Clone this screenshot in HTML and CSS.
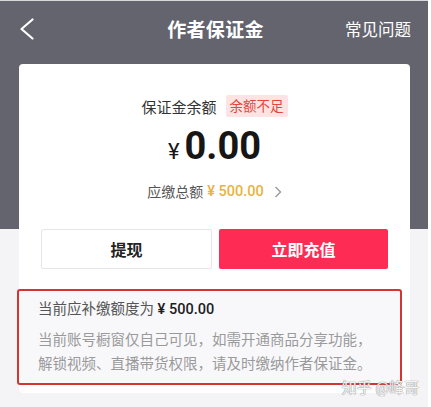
FILE: index.html
```html
<!DOCTYPE html>
<html lang="zh-CN">
<head>
    <meta charset="UTF-8">
    <meta name="viewport" content="width=device-width, initial-scale=1.0">
    <title>作者保证金</title>
    <link rel="stylesheet" href="styles.css">
</head>
<body>
    <div class="screen">
        <div class="nav">
            <span class="back">
                <svg width="14" height="22" viewBox="0 0 14 22"><polyline points="12.5,1.5 1.5,11 12.5,20.5" fill="none" stroke="#fff" stroke-width="2.2" stroke-linecap="round" stroke-linejoin="round"/></svg>
            </span>
            <h1>作者保证金</h1>
            <span class="faq">常见问题</span>
        </div>

        <div class="card">
            <div class="balance-row">
                <span class="label">保证金余额</span>
                <span class="badge">余额不足</span>
            </div>
            <div class="amount">
                <span class="yen">¥</span><span class="num">0.00</span>
            </div>
            <div class="due">
                <span>应缴总额</span>
                <span class="due-num">¥ 500.00</span>
                <svg class="arrow" width="8" height="12" viewBox="0 0 8 12"><polyline points="1.5,1 6.5,6 1.5,11" fill="none" stroke="#9a9a9a" stroke-width="1.4"/></svg>
            </div>
            <div class="buttons">
                <button class="btn btn-plain">提现</button>
                <button class="btn btn-red">立即充值</button>
            </div>
            <div class="notice">
                <p class="notice-title">当前应补缴额度为 <b>¥ 500.00</b></p>
                <p class="notice-text">当前账号橱窗仅自己可见，如需开通商品分享功能，解锁视频、直播带货权限，请及时缴纳作者保证金。</p>
            </div>
        </div>

        <div class="watermark">知乎 @峰哥</div>
    </div>
</body>
</html>
```

FILE: styles.css
```css
body {
    margin: 0;
    background-color: #ffffff;
    font-family: Roboto, "Noto Sans CJK SC", sans-serif;
    overflow: hidden;
}
.screen {
    position: relative;
    width: 428px;
    height: 407px;
    border-top: 1px solid #d9d9dd;
    box-sizing: border-box;
    background: linear-gradient(#64646e 0, #64646e 228px, #f4f4f6 228px);
}
.nav {
    height: 55px;
    padding: 0 17px 0 20px;
    display: grid;
    grid-template-columns: 1fr auto 1fr;
    align-items: center;
    color: white;
}
.back {
    display: flex;
    align-items: center;
}
.nav h1 {
    margin: 0;
    font-size: 19px;
    font-weight: bold;
    letter-spacing: 0.3px;
}
.faq {
    justify-self: end;
    font-size: 16.5px;
}
.card {
    margin: 8px 18px 0 19px;
    padding: 30px 12px 8px 22px;
    background-color: white;
    border-radius: 4px;
}
.balance-row {
    display: flex;
    justify-content: center;
    align-items: center;
    gap: 9px;
    height: 24px;
    margin-right: 10px;
}
.label {
    font-size: 15px;
    color: #333;
}
.badge {
    font-size: 13.5px;
    color: #e8443e;
    background-color: #fde4e3;
    height: 22px;
    line-height: 22px;
    padding: 0 4px;
    border-radius: 2px;
}
.amount {
    margin-top: 9px;
    margin-right: 10px;
    display: flex;
    justify-content: center;
    align-items: baseline;
    line-height: 38px;
    color: #161616;
}
.yen {
    font-size: 22px;
    margin-right: 5px;
}
.num {
    font-size: 38px;
    font-weight: bold;
}
.due {
    margin-top: 11px;
    margin-right: 10px;
    display: flex;
    justify-content: center;
    align-items: center;
    line-height: 20px;
    font-size: 14px;
    color: #555;
}
.due-num {
    margin-left: 4px;
    color: #e8b43e;
    font-weight: 500;
    font-size: 14.5px;
}
.arrow {
    margin-left: 10px;
}
.buttons {
    margin-top: 27px;
    display: flex;
    gap: 7px;
    width: 347px;
}
.btn {
    flex: 1;
    height: 40px;
    font-family: "Noto Sans CJK SC", sans-serif;
    font-size: 16px;
    font-weight: bold;
    border-radius: 2px;
    cursor: pointer;
}
.btn-plain {
    background-color: white;
    border: 1px solid #e6e6e6;
    color: #222;
}
.btn-red {
    background-color: #fe2c55;
    border: none;
    color: white;
}
.notice {
    margin: 20px 0 0 -24px;
    padding: 8px 18px 6px 19px;
    width: 344px;
    background-color: #f8f8fa;
    border: 2.5px solid #d4352e;
    border-radius: 3px;
}
.notice p {
    margin: 0;
}
.notice-title {
    font-size: 14.5px;
    line-height: 22px;
    color: #555;
}
.notice-title b {
    color: #1c1c1c;
    font-weight: 500;
    font-family: Roboto, sans-serif;
}
.notice-text {
    margin-top: 8px !important;
    font-size: 14.5px;
    line-height: 24px;
    color: #9a9a9a;
}
.watermark {
    position: absolute;
    right: 9px;
    top: 375px;
    font-size: 15px;
    color: #f4f4f4;
    text-shadow: 0 0 1px #8a8a8a, 0 0 1px #8a8a8a;
}
```
